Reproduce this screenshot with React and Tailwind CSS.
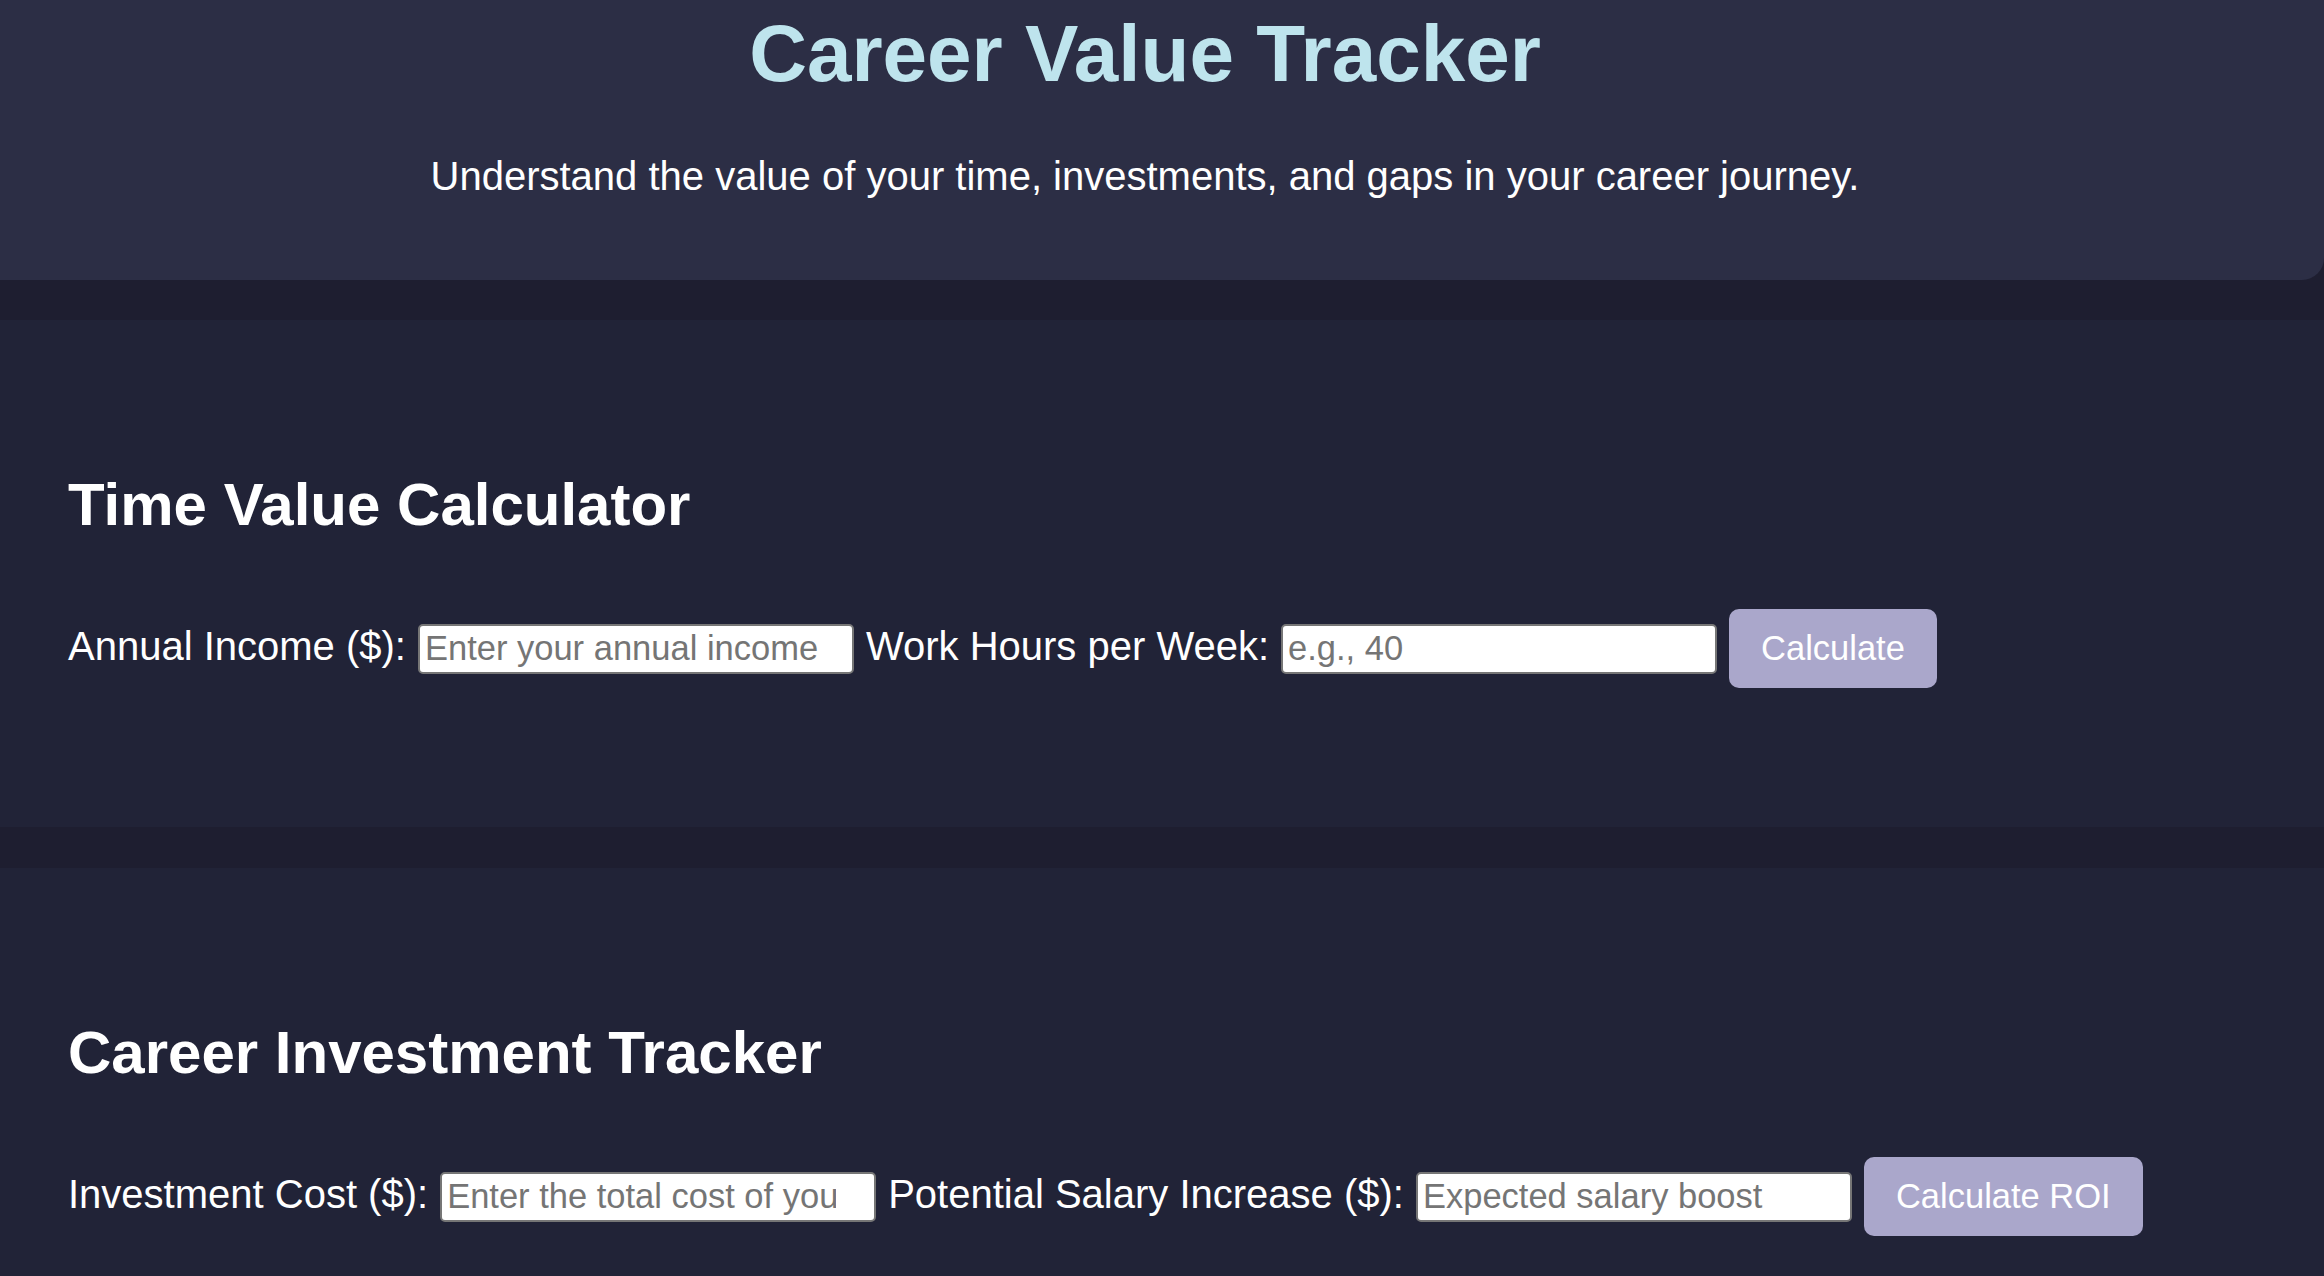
import React, { useState } from 'react'

const Field = ({ label, placeholder, value, onChange, padRight = 'pr-[17px]' }) => (
  <>
    <label className="leading-[46px]">{label}</label>
    <input
      type="number"
      value={value}
      onChange={(e) => onChange(e.target.value)}
      placeholder={placeholder}
      className={`w-[436px] h-[50px] bg-white text-black border-2 border-[#767676] rounded-[5px] pl-[5px] ${padRight} text-[34.5px] placeholder:text-[#757575] outline-none`}
    />
  </>
)

const Section = ({ title, children }) => (
  <section className="bg-[#212337] px-[68px] pt-[150px] pb-[139px]">
    <h2 className="text-[60px] font-bold leading-[69px]">{title}</h2>
    <div className="mt-[70px] flex flex-wrap items-baseline gap-[12px] text-[40px]">
      {children}
    </div>
  </section>
)

export default function App() {
  const [income, setIncome] = useState('')
  const [hours, setHours] = useState('')
  const [cost, setCost] = useState('')
  const [boost, setBoost] = useState('')

  return (
    <div className="min-h-screen bg-[#1e1e30] text-white font-['Liberation_Sans',Arial,sans-serif]">
      {/* Header */}
      <header className="bg-[#2c2e45] rounded-br-[22px] pt-[8px] pb-[81px] pr-[34px] text-center">
        <h1 className="text-[80px] font-bold leading-[92px] text-[#bee4ed]">Career Value Tracker</h1>
        <p className="mt-[53px] text-[40px] leading-[46px]">
          Understand the value of your time, investments, and gaps in your career journey.
        </p>
      </header>

      <main className="mt-[40px] flex flex-col gap-[41px]">
        {/* Time value */}
        <Section title="Time Value Calculator">
          <Field label="Annual Income ($):" placeholder="Enter your annual income" value={income} onChange={setIncome} />
          <Field label="Work Hours per Week:" placeholder="e.g., 40" value={hours} onChange={setHours} />
          <button className="bg-[#aaa7cb] text-white text-[34.5px] leading-[39px] px-[32px] py-[20px] rounded-[10px]">
            Calculate
          </button>
        </Section>

        {/* Investment */}
        <Section title="Career Investment Tracker">
          <Field
            label="Investment Cost ($):"
            placeholder="Enter the total cost of your investment"
            value={cost}
            onChange={setCost}
            padRight="pr-[23px]"
          />
          <Field label="Potential Salary Increase ($):" placeholder="Expected salary boost" value={boost} onChange={setBoost} />
          <button className="bg-[#aaa7cb] text-white text-[34.5px] leading-[39px] px-[32px] py-[20px] rounded-[10px]">
            Calculate ROI
          </button>
        </Section>
      </main>
    </div>
  )
}
